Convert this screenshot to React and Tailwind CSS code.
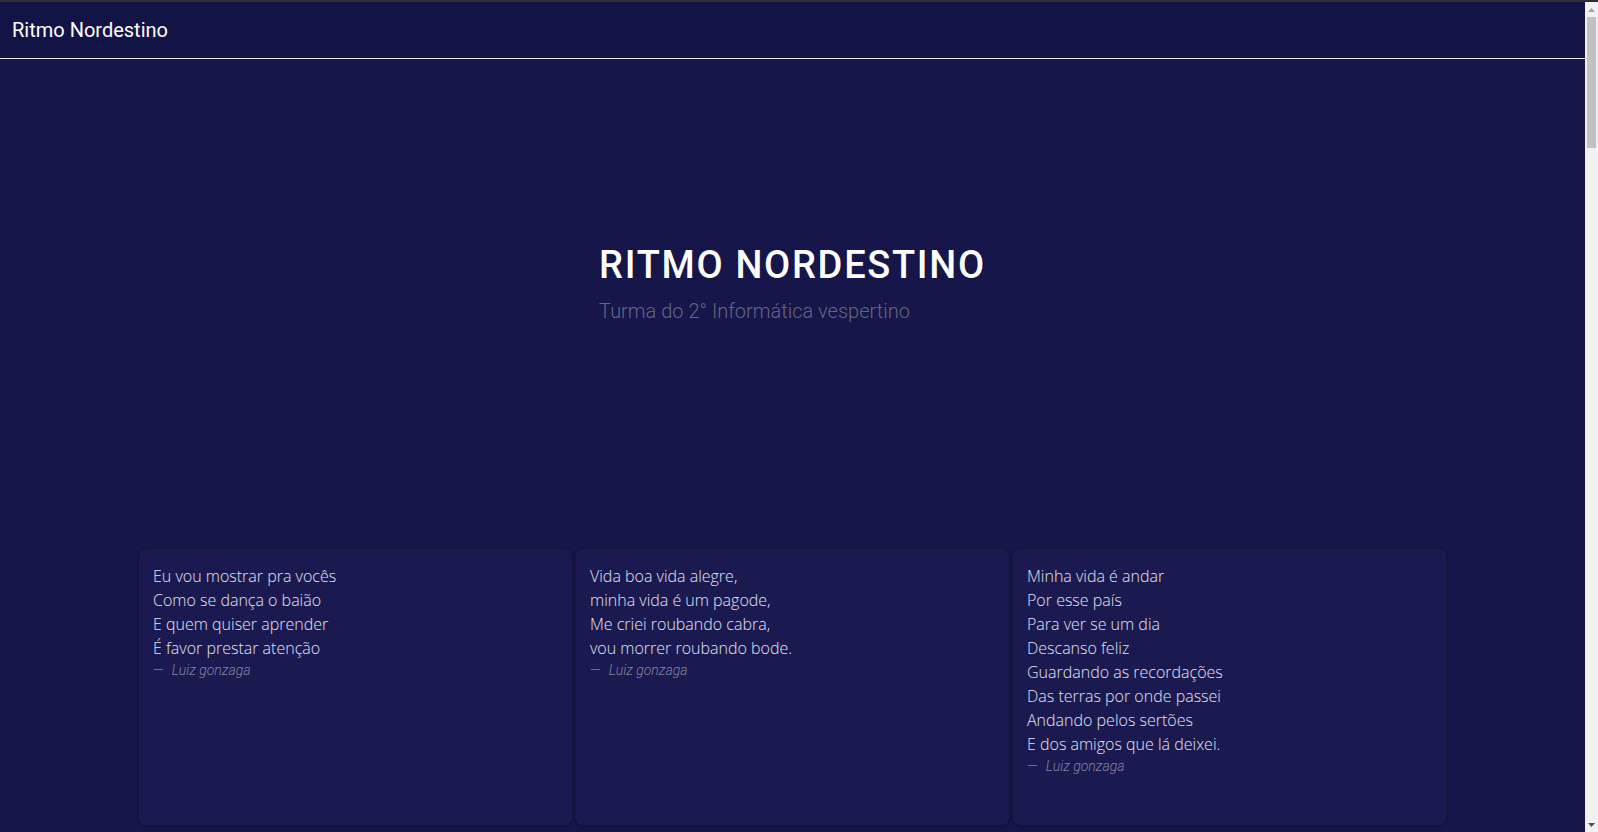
import React from "react";

const poems = [
  ["Eu vou mostrar pra vocês", "Como se dança o baião", "E quem quiser aprender", "É favor prestar atenção"],
  ["Vida boa vida alegre,", "minha vida é um pagode,", "Me criei roubando cabra,", "vou morrer roubando bode."],
  [
    "Minha vida é andar",
    "Por esse país",
    "Para ver se um dia",
    "Descanso feliz",
    "Guardando as recordações",
    "Das terras por onde passei",
    "Andando pelos sertões",
    "E dos amigos que lá deixei.",
  ],
];

function Scrollbar() {
  return (
    <div className="w-[13px] bg-[#f1f1f1] flex flex-col">
      <div className="h-[15px] flex items-center justify-center">
        <svg width="7" height="4" viewBox="0 0 7 4">
          <path d="M3.5 0L7 4H0z" fill="#a3a3a3" />
        </svg>
      </div>
      <div className="flex-1 px-[2px]">
        <div className="h-[131px] bg-[#c1c1c1]" />
      </div>
      <div className="h-[15px] flex items-center justify-center">
        <svg width="7" height="4" viewBox="0 0 7 4">
          <path d="M0 0H7L3.5 4z" fill="#505050" />
        </svg>
      </div>
    </div>
  );
}

export default function App() {
  return (
    <div className="h-screen flex flex-col bg-[#16164b] font-['Roboto',sans-serif]">
      <div className="h-[2px] bg-[#2e2e33] shrink-0" />
      <div className="flex-1 flex min-h-0">
        <main className="flex-1 overflow-hidden">
          <nav className="h-[57px] flex items-center px-3 bg-[#131446] border-b border-[#e6e6ee]">
            <span className="text-[20px] text-white">Ritmo Nordestino</span>
          </nav>

          <section className="pt-[185px] pb-[222px] flex justify-center">
            <div>
              <h1 className="text-[38px] leading-[43px] font-medium text-white tracking-[1.7px] mb-[9px]">
                RITMO NORDESTINO
              </h1>
              <p className="text-[20px] leading-[30px] font-light text-[#62667e]">
                Turma do 2° Informática vespertino
              </p>
            </div>
          </section>

          <div className="w-[1309px] mx-auto grid grid-cols-3 gap-[2px] pb-[4200px]">
            {poems.map((lines, i) => (
              <div
                key={i}
                className="h-[278px] rounded-lg border border-[#15143f] bg-[#1a1950] shadow-[0_1px_3px_rgba(0,0,0,0.25)] pt-[15px] pb-4 px-[14px]"
              >
                <blockquote className="font-['Open_Sans',sans-serif] font-light text-[16px] leading-[24px] text-[#e4e4f2]">
                  {lines.map((l) => (
                    <div key={l}>{l}</div>
                  ))}
                  <footer className="font-['Roboto',sans-serif] italic text-[14px] leading-[21px] text-[#83859f]">
                    <span className="not-italic mr-2">—</span>Luiz gonzaga
                  </footer>
                </blockquote>
              </div>
            ))}
          </div>
        </main>
        <Scrollbar />
      </div>
    </div>
  );
}
